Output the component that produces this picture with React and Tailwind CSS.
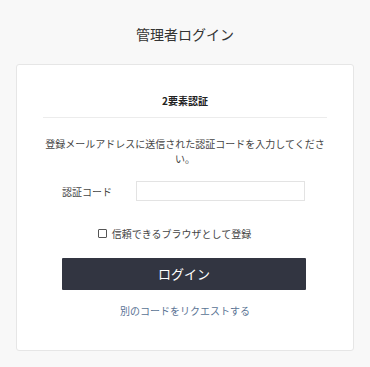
import React from 'react'

const App = () => {
  return (
    <div className="min-h-[367px] bg-[#f8f8f8] pt-[23px] pb-[16px] px-[16px] font-['Noto_Sans_CJK_JP','Noto_Sans',sans-serif]">
      <h1 className="text-center text-[14px] leading-[22px] text-[#333] font-normal">管理者ログイン</h1>
      <div className="mt-[19px] bg-white border border-[#e6e6e6] rounded-[3px] px-[26px] pt-[28px] pb-[32px]">
        <h2 className="text-center text-[10px] leading-[16px] font-bold text-[#222]">2要素認証</h2>
        <div className="mt-[8px] border-t border-[#ececec]"></div>
        <p className="mt-[18px] text-center text-[10px] leading-[15px] text-[#444]">
          登録メールアドレスに送信された認証コードを入力してください。
        </p>
        <div className="mt-[15px] flex items-center px-[19px]">
          <label className="w-[74px] text-[10px] text-[#444]">認証コード</label>
          <input type="text" className="w-[169px] h-[20px] border border-[#e3e3e3] bg-white outline-none" />
        </div>
        <div className="mt-[25px] flex items-center justify-center gap-[5px] h-[14px] pr-[21px]">
          <span className="w-[9px] h-[9px] border border-[#555] rounded-[1px] bg-white"></span>
          <span className="text-[10px] text-[#444]">信頼できるブラウザとして登録</span>
        </div>
        <div className="mt-[18px] px-[19px]">
          <button className="w-[244px] h-[32px] bg-[#323541] text-white text-[13px] rounded-[1px]">ログイン</button>
        </div>
        <div className="mt-[14px] text-center text-[10px] leading-[14px] text-[#5a7394]">
          別のコードをリクエストする
        </div>
      </div>
    </div>
  )
}

export default App
